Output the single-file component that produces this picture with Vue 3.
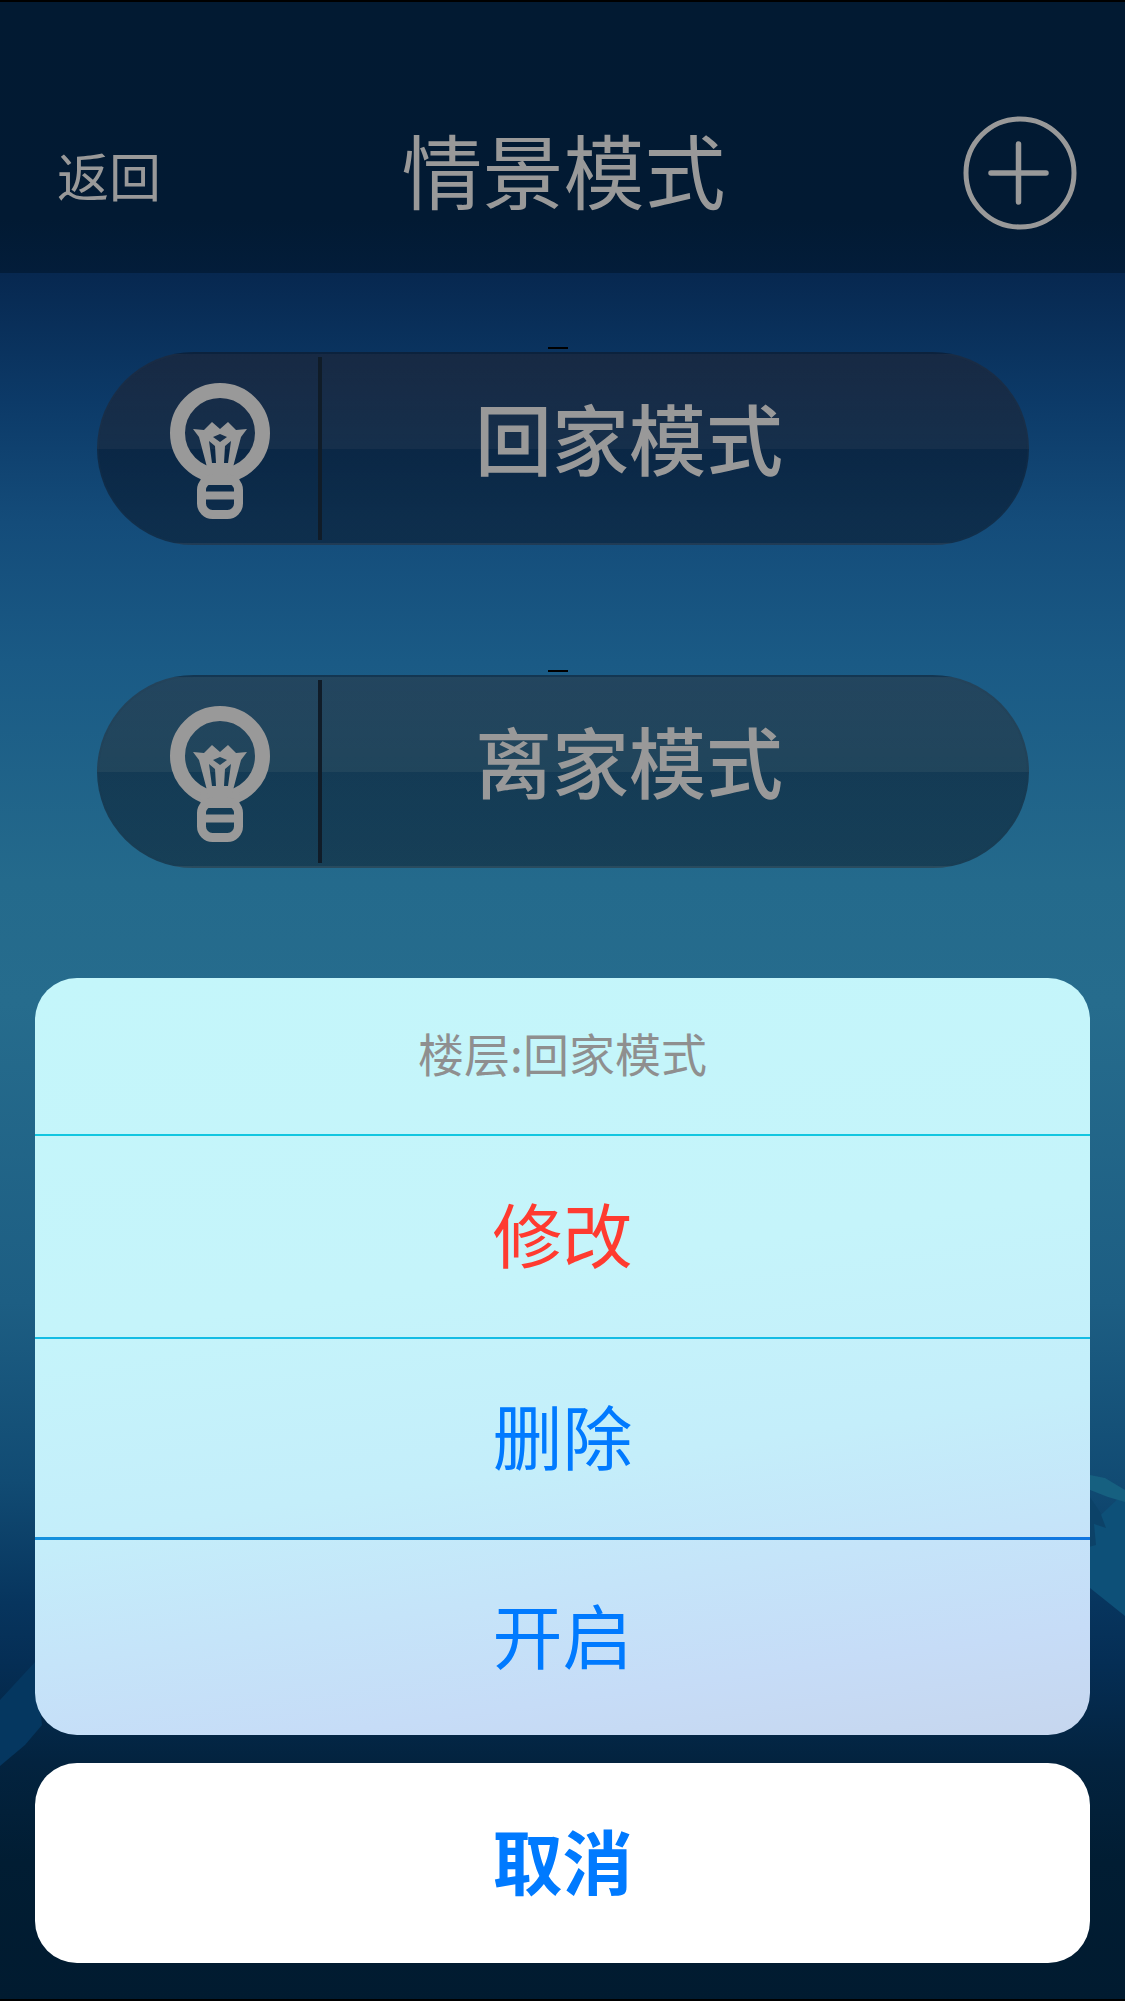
<template>
  <div class="page">
    <svg class="mountains" viewBox="0 0 1125 2001" aria-hidden="true">
      <path d="M0 1700 L35 1662 L42 1725 L25 1745 L0 1766 Z" fill="#053760" />
      <path d="M1085 1530 L1125 1492 V1616 L1085 1584 Z" fill="#0d5078" />
      <path d="M1085 1474 L1105 1478 L1125 1490 V1502 L1108 1497 L1085 1488 Z" fill="#166080" />
      <path d="M1085 1490 L1100 1512 L1106 1528 L1094 1524 L1096 1545 L1085 1548 Z" fill="#0c4268" />
    </svg>

    <header class="topbar">
      <span class="back">返回</span>
      <h1 class="title">情景模式</h1>
      <svg class="add" viewBox="0 0 116 116" aria-label="添加">
        <circle cx="58" cy="58" r="54" fill="none" stroke="#999" stroke-width="5" />
        <path d="M29 58 H84 M56.500 29 V87" fill="none" stroke="#999" stroke-width="5.500" stroke-linecap="round" />
      </svg>
    </header>

    <main class="scenes">
      <div v-for="scene in scenes" :key="scene" class="scene">
        <i class="dash"></i>
        <div class="bulb-cell">
          <svg class="bulb" viewBox="0 0 100 136" aria-hidden="true">
            <circle cx="50" cy="50" r="42.500" fill="none" stroke="#999" stroke-width="15" />
            <path d="M30 86 H70 L69 102 H31 Z" fill="#999" />
            <rect x="31.500" y="96" width="37" height="35.500" rx="11" fill="none" stroke="#999" stroke-width="9" />
            <path d="M33 112.500 H67" stroke="#999" stroke-width="8" />
            <path
              fill="#999"
              fill-rule="evenodd"
              d="M23 46 L34 47 L42 39 L50 46 L58 39 L66 47 L77 46 L71 54 L62 88 H38 L29 54 Z
                 M39 58 L45 63 L46 80 H42 Z
                 M61 58 L55 63 L54 80 H58 Z
                 M43 54 L50 59 L57 54 L50 51 Z"
            />
          </svg>
        </div>
        <i class="divider"></i>
        <span class="scene-name">{{ scene }}</span>
      </div>
    </main>

    <div class="overlay">
      <div class="sheet">
        <div class="sheet-row sheet-title">楼层:回家模式</div>
        <div v-for="action in actions" :key="action.label" class="sheet-row" :class="action.cls">
          {{ action.label }}
        </div>
      </div>
      <div class="cancel">取消</div>
    </div>
  </div>
</template>

<script setup>
const scenes = ["回家模式", "离家模式"];

const actions = [
  { label: "修改", cls: "row-edit" },
  { label: "删除", cls: "row-delete" },
  { label: "开启", cls: "row-open" },
];
</script>

<style>
html,
body {
  overflow: hidden;
  background: #000;
}
</style>

<style scoped>
.page {
  position: relative;
  box-sizing: border-box;
  width: 1125px;
  height: 2001px;
  overflow: hidden;
  border-top: 2px solid #000;
  border-bottom: 2px solid #000;
  font-family: "Noto Sans CJK SC", "Noto Sans", sans-serif;
  background: linear-gradient(
    180deg,
    #072850 0,
    #072850 272px,
    #0c3a68 400px,
    #144c7a 520px,
    #1a5a85 660px,
    #246a8c 880px,
    #266c8d 1000px,
    #1d5e83 1300px,
    #114b73 1480px,
    #07355e 1600px,
    #052e55 1660px,
    #03233f 1760px,
    #011d33 1860px,
    #011b30 2001px
  );
}

.mountains {
  position: absolute;
  top: -2px;
  left: 0;
  width: 1125px;
  height: 2001px;
}

.topbar {
  position: relative;
  box-sizing: border-box;
  height: 271px;
  padding: 70px 47px 0 57px;
  display: flex;
  align-items: center;
  justify-content: space-between;
  background: linear-gradient(180deg, #021a32 0, #021a33 80%, #031d3a 100%);
  color: #999;
}

.back {
  font-size: 52px;
  line-height: 60px;
  margin-top: 5px;
}

.title {
  margin: 0 0 10px 4px;
  font-size: 81px;
  font-weight: 400;
  line-height: 96px;
}

.add {
  width: 116px;
  height: 116px;
}

.scenes {
  position: relative;
  padding: 79px 96px 0 97px;
  display: flex;
  flex-direction: column;
  gap: 130px;
}

.scene {
  position: relative;
  box-sizing: border-box;
  height: 193px;
  padding: 3px 0;
  display: flex;
  border: 2px solid rgba(40, 55, 75, 0.15);
  border-radius: 97px;
  background: linear-gradient(
    180deg,
    rgba(56, 20, 5, 0.3) 0,
    rgba(36, 14, 6, 0.34) 50%,
    rgba(4, 1, 8, 0.4) 50%,
    rgba(4, 1, 8, 0.4) 100%
  );
}

.dash {
  position: absolute;
  top: -7px;
  left: 449px;
  width: 20px;
  height: 2px;
  background: #000;
}

.bulb-cell {
  width: 219px;
  padding-left: 71px;
  box-sizing: border-box;
  display: flex;
  align-items: center;
}

.bulb {
  width: 100px;
  height: 136px;
  margin-top: 4px;
}

.divider {
  width: 4px;
  background: #101c28;
}

.scene-name {
  flex: 1;
  padding: 0 91px 24px 0;
  display: flex;
  align-items: center;
  justify-content: center;
  font-size: 77px;
  font-weight: 500;
  color: #999;
}

.overlay {
  position: absolute;
  left: 35px;
  right: 35px;
  bottom: 36px;
  display: flex;
  flex-direction: column;
  gap: 28px;
}

.sheet {
  height: 757px;
  display: grid;
  grid-template-rows: 156px 203px 200px 198px;
  overflow: hidden;
  border-radius: 42px;
  background: linear-gradient(
    172deg,
    #c4f6fa 0,
    #c5f4fa 40%,
    #c4eefa 62%,
    #c5e4f9 76%,
    #c6dcf7 88%,
    #c6d6ee 100%
  );
}

.sheet-row {
  box-sizing: border-box;
  padding-bottom: 8px;
  display: flex;
  align-items: center;
  justify-content: center;
  font-size: 70px;
  color: #007aff;
}

.sheet-title {
  font-size: 46px;
  color: #8f8f8f;
}

.row-edit {
  border-top: 2px solid #12c6e0;
  color: #ff3b30;
}

.row-delete {
  border-top: 2px solid #14bce4;
}

.row-open {
  border-top: 3px solid;
  border-image: linear-gradient(90deg, #1590dd, #1590dd 50%, #1276e0) 1;
}

.cancel {
  height: 200px;
  padding-bottom: 8px;
  box-sizing: border-box;
  display: flex;
  align-items: center;
  justify-content: center;
  border-radius: 42px;
  background: #fff;
  color: #007aff;
  font-size: 70px;
  font-weight: 600;
}
</style>
